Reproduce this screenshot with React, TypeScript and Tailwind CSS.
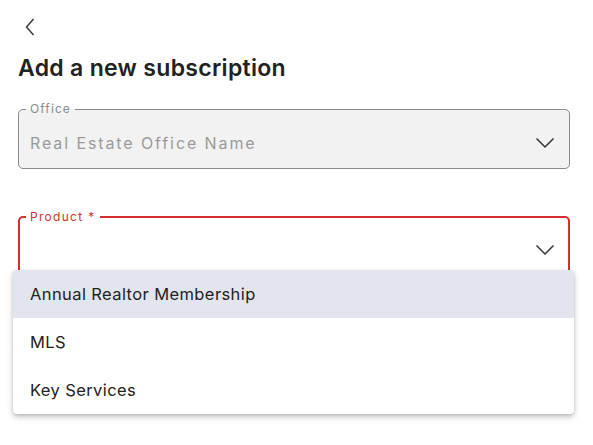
const products = ["Annual Realtor Membership", "MLS", "Key Services"];

function Chevron() {
  return (
    <svg width="20" height="12" viewBox="0 0 20 12" fill="none" className="shrink-0 text-[#333]">
      <polyline points="1.5,1.5 10,10 18.5,1.5" stroke="currentColor" strokeWidth="1.5" />
    </svg>
  );
}

export default function App() {
  return (
    <main className="relative h-[445px] w-[593px] overflow-hidden bg-white font-['Inter','Liberation_Sans',sans-serif] text-[#1f1f1f]">
      <div className="px-[18px] pt-[18px] pr-[23px]">
        <button className="ml-[7px] flex h-[18px] w-[11px] items-center text-[#333]">
          <svg width="10" height="18" viewBox="0 0 10 18" fill="none">
            <polyline points="8.5,1 1.5,9 8.5,17" stroke="currentColor" strokeWidth="1.4" />
          </svg>
        </button>
        <h1 className="mt-[18px] text-[23px] font-semibold leading-7 tracking-[0.3px] text-[#222]">
          Add a new subscription
        </h1>

        <fieldset className="mt-[21px] flex h-[66px] items-center justify-between rounded-[5px] border border-[#8a8a8a] bg-[#f2f2f2] pt-[3px] pl-[11px] pr-[14px]">
          <legend className="-ml-[4px] px-[4px] text-[12px] leading-3 tracking-[1.1px] text-[#8a8a8a]">
            Office
          </legend>
          <span className="text-[16px] tracking-[1.9px] text-[#9a9a9a]">
            Real Estate Office Name
          </span>
          <Chevron />
        </fieldset>

        <fieldset className="mt-[42px] flex h-[66px] items-center justify-end rounded-[5px] border-2 border-[#d32f2f] pt-[1px] pl-[10px] pr-[13px]">
          <legend className="-ml-[4px] px-[4px] text-[12px] leading-3 tracking-[1.3px] text-[#d32f2f]">
            Product *
          </legend>
          <Chevron />
        </fieldset>
      </div>

      <ul className="absolute left-[13px] top-[270px] w-[561px] overflow-hidden rounded-[4px] bg-white shadow-[0_3px_6px_rgba(0,0,0,0.22),0_1px_3px_rgba(0,0,0,0.12)]">
        {products.map((name, i) => (
          <li
            key={name}
            className={`flex h-[48px] items-center px-[17px] text-[16.5px] tracking-[0.4px] text-[#222] ${
              i === 0 ? "bg-[#e3e5ee]" : ""
            }`}
          >
            {name}
          </li>
        ))}
      </ul>
    </main>
  );
}
